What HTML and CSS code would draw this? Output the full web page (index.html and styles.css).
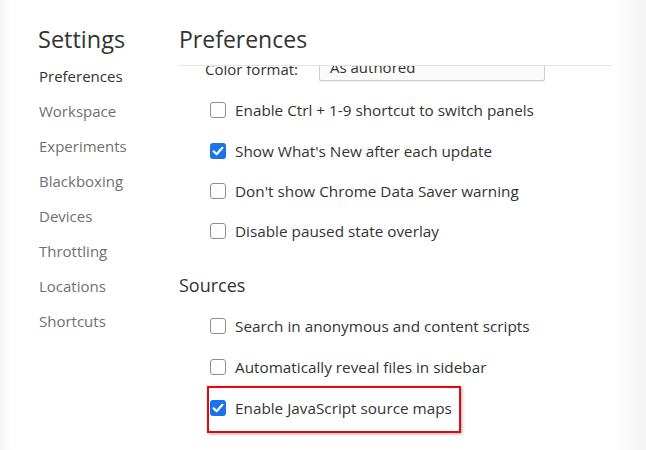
FILE: index.html
```html
<!DOCTYPE html>
<html>
<head>
<meta charset="utf-8">
<link rel="stylesheet" href="styles.css">
</head>
<body>
<div class="app">
  <nav class="sidebar">
    <h1 class="title">Settings</h1>
    <ul class="nav">
      <li class="nav-item active">Preferences</li>
      <li class="nav-item">Workspace</li>
      <li class="nav-item">Experiments</li>
      <li class="nav-item">Blackboxing</li>
      <li class="nav-item">Devices</li>
      <li class="nav-item">Throttling</li>
      <li class="nav-item">Locations</li>
      <li class="nav-item">Shortcuts</li>
    </ul>
  </nav>
  <main class="main">
    <header class="header"><h2 class="header-title">Preferences</h2></header>
    <div class="scroll">
      <div class="scroll-inner">
        <div class="select-row">
          <span class="select-label">Color format:</span>
          <span class="select">As authored<span class="caret"></span></span>
        </div>
        <div class="group">
          <label class="row"><span class="box"></span><span>Enable Ctrl + 1-9 shortcut to switch panels</span></label>
          <label class="row"><span class="box checked"><svg viewBox="0 0 16 16" width="16" height="16"><path d="M3.6 8.3 L6.6 11.2 L12.4 4.8" fill="none" stroke="#fff" stroke-width="2.2" stroke-linecap="round" stroke-linejoin="round"/></svg></span><span>Show What's New after each update</span></label>
          <label class="row"><span class="box"></span><span>Don't show Chrome Data Saver warning</span></label>
          <label class="row"><span class="box"></span><span>Disable paused state overlay</span></label>
        </div>
        <h3 class="section">Sources</h3>
        <div class="group src-group">
          <label class="row src"><span class="box"></span><span>Search in anonymous and content scripts</span></label>
          <label class="row src"><span class="box"></span><span>Automatically reveal files in sidebar</span></label>
          <label class="row src highlighted"><span class="box checked"><svg viewBox="0 0 16 16" width="16" height="16"><path d="M3.6 8.3 L6.6 11.2 L12.4 4.8" fill="none" stroke="#fff" stroke-width="2.2" stroke-linecap="round" stroke-linejoin="round"/></svg></span><span>Enable JavaScript source maps</span></label>
        </div>
      </div>
    </div>
  </main>
</div>
</body>
</html>
```

FILE: styles.css
```css
* { box-sizing: border-box; }
html, body { margin: 0; padding: 0; }
body {
  width: 646px;
  height: 450px;
  overflow: hidden;
  font-family: "Open Sans", "Noto Sans", sans-serif;
  color: #333;
  background: linear-gradient(to right, #f6f6f6 0, #ffffff 12px, #ffffff 612px, #f4f4f4 646px);
}
.app {
  display: flex;
  height: 450px;
}
.sidebar {
  width: 178px;
  flex: none;
  padding: 23px 0 0 38px;
}
.title {
  margin: 0;
  font-size: 23.5px;
  font-weight: 400;
  line-height: 32px;
  color: #333;
}
.nav {
  list-style: none;
  margin: 4px 0 0 1px;
  padding: 0;
}
.nav-item {
  font-size: 15px;
  line-height: 35px;
  height: 35px;
  color: #707070;
}
.nav-item.active { color: #333; }
.main {
  width: 434px;
  flex: none;
  display: flex;
  flex-direction: column;
}
.header {
  height: 66px;
  border-bottom: 1px solid #e4e4e4;
  padding: 23px 0 0 1px;
  flex: none;
}
.header-title {
  margin: 0;
  font-size: 23px;
  font-weight: 400;
  line-height: 32px;
  color: #333;
}
.scroll {
  flex: 1;
  overflow: hidden;
}
.scroll-inner {
  margin-top: -10px;
  padding-left: 32px;
}
.select-row {
  display: flex;
  align-items: center;
  height: 25px;
  font-size: 15px;
  color: #333;
}
.select-label { width: 114px; margin-left: -5px; }
.select {
  position: relative;
  width: 226px;
  height: 25px;
  border: 1px solid #cfcfcf;
  border-radius: 2px;
  box-shadow: 0 1px 1px rgba(0,0,0,0.08);
  background: #fbfbfb;
  padding-left: 10px;
  line-height: 21px;
}
.caret {
  position: absolute;
  right: 10px;
  top: 0;
  width: 3px;
  height: 2px;
  background: #333;
}
.group { padding-top: 9px; }
.row {
  display: flex;
  align-items: center;
  height: 40.4px;
  font-size: 15.3px;
  color: #333;
  position: relative;
}
.row.src { height: 41px; }
.box {
  width: 16px;
  height: 16px;
  flex: none;
  margin-right: 9px;
  border: 1px solid #8f8f8f;
  border-radius: 3px;
  background: #fff;
  display: flex;
}
.box.checked {
  border: none;
  background: #1a73e8;
}
.section {
  margin: 0 0 0 -31px;
  font-size: 18px;
  font-weight: 400;
  line-height: 24px;
  padding-top: 21px;
  color: #333;
}
.src-group { padding-top: 9px; }
.highlighted::after {
  content: "";
  position: absolute;
  left: -3px;
  top: -2px;
  width: 250px;
  height: 43px;
  border: 2px solid #e30613;
  box-shadow: 1px 1px 3px rgba(0,0,0,0.35);
}
```
